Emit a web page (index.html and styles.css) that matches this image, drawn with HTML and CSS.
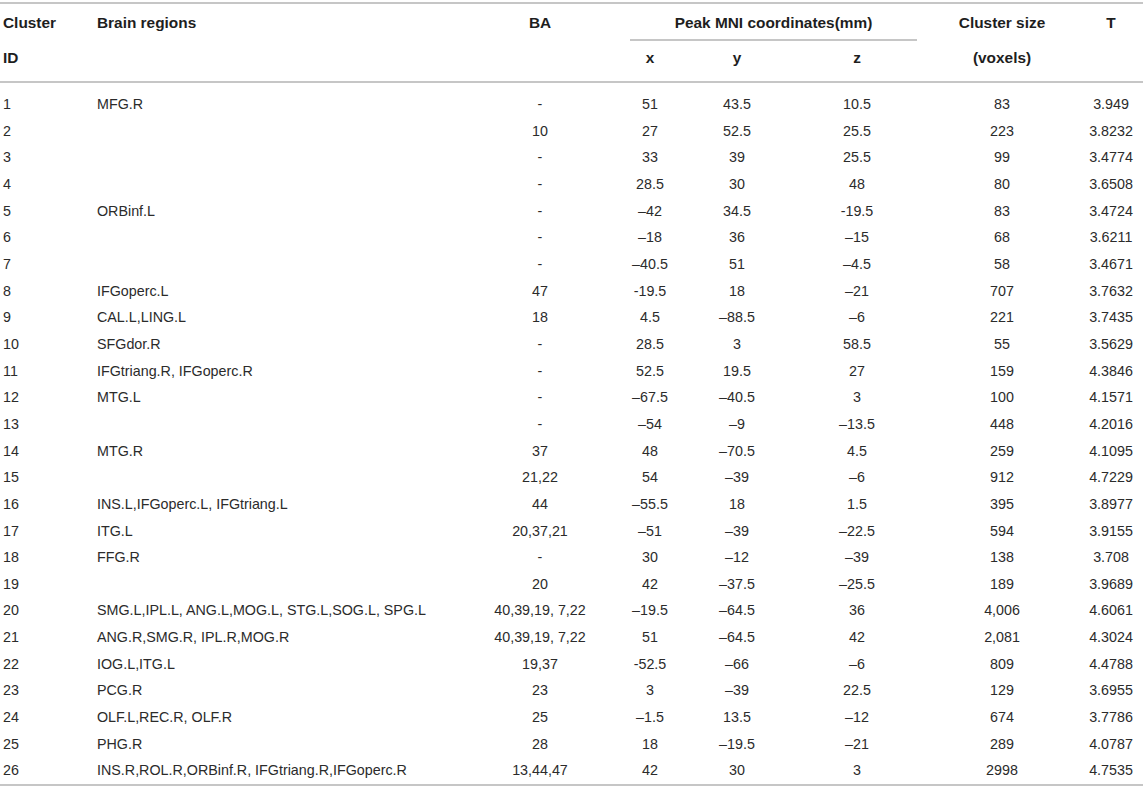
FILE: index.html
```html
<html>
	<head>
		<title>Peak MNI coordinates of clusters</title>
		<link rel="stylesheet" href="styles.css">
	</head>
	<body>

		<table class="clusters">
			<colgroup>
				<col class="c-id">
				<col class="c-region">
				<col class="c-ba">
				<col class="c-x">
				<col class="c-y">
				<col class="c-z">
				<col class="c-size">
				<col class="c-t">
			</colgroup>
			<thead>
				<tr class="head-top">
					<th class="left">Cluster</th>
					<th class="region">Brain regions</th>
					<th>BA</th>
					<th colspan="3" class="span"><div class="span-title">Peak MNI coordinates(mm)</div></th>
					<th>Cluster size</th>
					<th>T</th>
				</tr>
				<tr class="head-sub">
					<th class="left">ID</th>
					<th></th>
					<th></th>
					<th>x</th>
					<th>y</th>
					<th>z</th>
					<th>(voxels)</th>
					<th></th>
				</tr>
			</thead>
			<tbody>
				<tr class="first"><td>1</td><td class="region">MFG.R</td><td>-</td><td>51</td><td>43.5</td><td>10.5</td><td>83</td><td>3.949</td></tr>
				<tr><td>2</td><td class="region"></td><td>10</td><td>27</td><td>52.5</td><td>25.5</td><td>223</td><td>3.8232</td></tr>
				<tr><td>3</td><td class="region"></td><td>-</td><td>33</td><td>39</td><td>25.5</td><td>99</td><td>3.4774</td></tr>
				<tr><td>4</td><td class="region"></td><td>-</td><td>28.5</td><td>30</td><td>48</td><td>80</td><td>3.6508</td></tr>
				<tr><td>5</td><td class="region">ORBinf.L</td><td>-</td><td>–42</td><td>34.5</td><td>-19.5</td><td>83</td><td>3.4724</td></tr>
				<tr><td>6</td><td class="region"></td><td>-</td><td>–18</td><td>36</td><td>–15</td><td>68</td><td>3.6211</td></tr>
				<tr><td>7</td><td class="region"></td><td>-</td><td>–40.5</td><td>51</td><td>–4.5</td><td>58</td><td>3.4671</td></tr>
				<tr><td>8</td><td class="region">IFGoperc.L</td><td>47</td><td>-19.5</td><td>18</td><td>–21</td><td>707</td><td>3.7632</td></tr>
				<tr><td>9</td><td class="region">CAL.L,LING.L</td><td>18</td><td>4.5</td><td>–88.5</td><td>–6</td><td>221</td><td>3.7435</td></tr>
				<tr><td>10</td><td class="region">SFGdor.R</td><td>-</td><td>28.5</td><td>3</td><td>58.5</td><td>55</td><td>3.5629</td></tr>
				<tr><td>11</td><td class="region">IFGtriang.R, IFGoperc.R</td><td>-</td><td>52.5</td><td>19.5</td><td>27</td><td>159</td><td>4.3846</td></tr>
				<tr><td>12</td><td class="region">MTG.L</td><td>-</td><td>–67.5</td><td>–40.5</td><td>3</td><td>100</td><td>4.1571</td></tr>
				<tr><td>13</td><td class="region"></td><td>-</td><td>–54</td><td>–9</td><td>–13.5</td><td>448</td><td>4.2016</td></tr>
				<tr><td>14</td><td class="region">MTG.R</td><td>37</td><td>48</td><td>–70.5</td><td>4.5</td><td>259</td><td>4.1095</td></tr>
				<tr><td>15</td><td class="region"></td><td>21,22</td><td>54</td><td>–39</td><td>–6</td><td>912</td><td>4.7229</td></tr>
				<tr><td>16</td><td class="region">INS.L,IFGoperc.L, IFGtriang.L</td><td>44</td><td>–55.5</td><td>18</td><td>1.5</td><td>395</td><td>3.8977</td></tr>
				<tr><td>17</td><td class="region">ITG.L</td><td>20,37,21</td><td>–51</td><td>–39</td><td>–22.5</td><td>594</td><td>3.9155</td></tr>
				<tr><td>18</td><td class="region">FFG.R</td><td>-</td><td>30</td><td>–12</td><td>–39</td><td>138</td><td>3.708</td></tr>
				<tr><td>19</td><td class="region"></td><td>20</td><td>42</td><td>–37.5</td><td>–25.5</td><td>189</td><td>3.9689</td></tr>
				<tr><td>20</td><td class="region">SMG.L,IPL.L, ANG.L,MOG.L, STG.L,SOG.L, SPG.L</td><td>40,39,19, 7,22</td><td>–19.5</td><td>–64.5</td><td>36</td><td>4,006</td><td>4.6061</td></tr>
				<tr><td>21</td><td class="region">ANG.R,SMG.R, IPL.R,MOG.R</td><td>40,39,19, 7,22</td><td>51</td><td>–64.5</td><td>42</td><td>2,081</td><td>4.3024</td></tr>
				<tr><td>22</td><td class="region">IOG.L,ITG.L</td><td>19,37</td><td>-52.5</td><td>–66</td><td>–6</td><td>809</td><td>4.4788</td></tr>
				<tr><td>23</td><td class="region">PCG.R</td><td>23</td><td>3</td><td>–39</td><td>22.5</td><td>129</td><td>3.6955</td></tr>
				<tr><td>24</td><td class="region">OLF.L,REC.R, OLF.R</td><td>25</td><td>–1.5</td><td>13.5</td><td>–12</td><td>674</td><td>3.7786</td></tr>
				<tr><td>25</td><td class="region">PHG.R</td><td>28</td><td>18</td><td>–19.5</td><td>–21</td><td>289</td><td>4.0787</td></tr>
				<tr><td>26</td><td class="region">INS.R,ROL.R,ORBinf.R, IFGtriang.R,IFGoperc.R</td><td>13,44,47</td><td>42</td><td>30</td><td>3</td><td>2998</td><td>4.7535</td></tr>
			</tbody>
		</table>

	</body>
</html>
```

FILE: styles.css
```css
body {
	margin: 0;
	font-family: "Liberation Sans", Arial, Helvetica, sans-serif;
	font-size: 14.3px;
	color: #2b2b2b;
	background: #fff;
}

table.clusters {
	width: 1143px;
	table-layout: fixed;
	border-collapse: collapse;
	margin-top: 2px;
	font-size: 14.3px;
	border-top: 2px solid #c6c6c6;
	border-bottom: 2px solid #c6c6c6;
}

col.c-id { width: 90px; }
col.c-region { width: 375px; }
col.c-ba { width: 150px; }
col.c-x { width: 70px; }
col.c-y { width: 104px; }
col.c-z { width: 136px; }
col.c-size { width: 154px; }
col.c-t { width: 64px; }

th, td {
	padding: 0;
	text-align: center;
	white-space: nowrap;
	vertical-align: top;
}

th {
	font-size: 15.4px;
	line-height: 18px;
	font-weight: bold;
	color: #1e1e1e;
}

th.left, td:first-child {
	text-align: left;
	padding-left: 3px;
}

th.region, td.region {
	text-align: left;
	padding-left: 7px;
}

.head-top th {
	padding-top: 10px;
}

.span-title {
	margin: 0 8px 0 15px;
	padding-bottom: 7px;
	border-bottom: 2px solid #c6c6c6;
}

.head-sub th {
	padding-top: 8px;
	padding-bottom: 14px;
	border-bottom: 2px solid #c6c6c6;
}

td {
	height: 26.66px;
	line-height: 26.66px;
}

tr.first td {
	padding-top: 8px;
}
```
